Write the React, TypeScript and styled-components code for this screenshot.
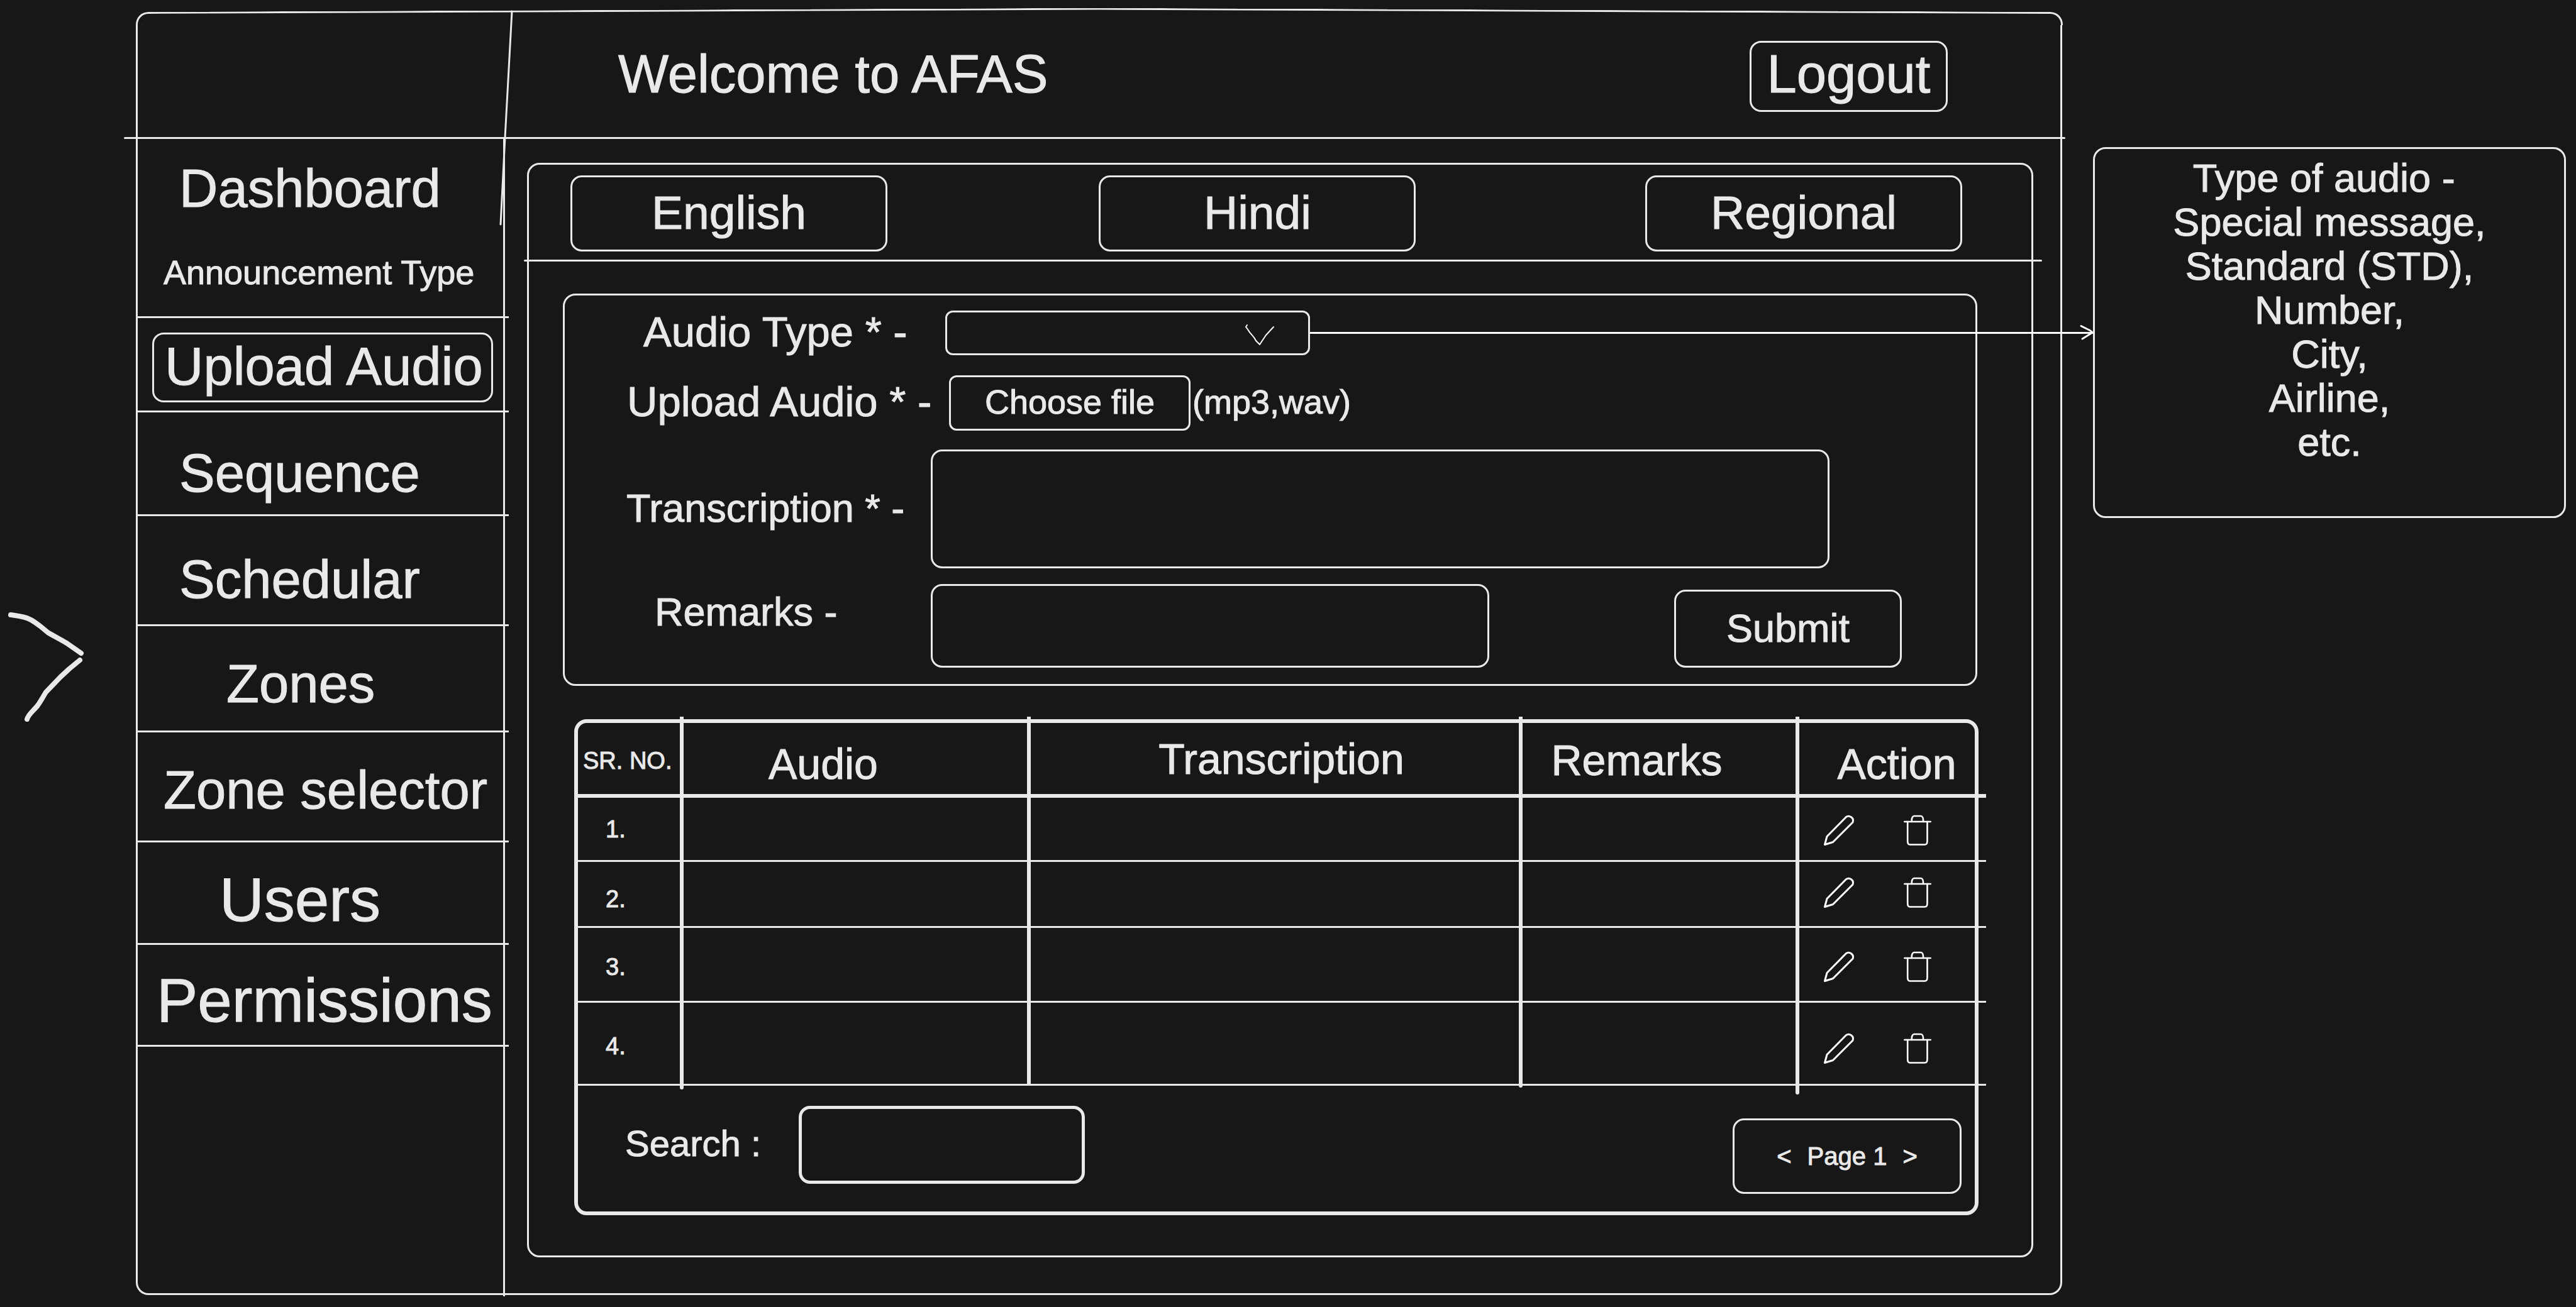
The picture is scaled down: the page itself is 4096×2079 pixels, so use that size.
import React from "react";
import styled, { createGlobalStyle, css } from "styled-components";

const ink = "#e9e9e9";
const paper = "#171717";
const bright = "#ffffff";

const GlobalStyle = createGlobalStyle`
  *, *::before, *::after { box-sizing: border-box; }
  body {
    margin: 0;
    background: ${paper};
    color: ${ink};
    font-family: "Liberation Sans", Arial, sans-serif;
    -webkit-text-stroke: 1px ${ink};
    overflow-x: hidden;
  }
  button, input, select, textarea { font-family: inherit; color: inherit; }
`;

const outlined = css`
  border: 3px solid ${ink};
  border-radius: 18px;
  background: transparent;
`;

const Page = styled.div`
  position: relative;
  display: flex;
  align-items: flex-start;
  min-height: 100vh;
  padding: 19px 16px 19px 0;
`;

const Gutter = styled.aside`
  flex: 0 0 216px;
  padding: 951px 0 0 10px;
`;

const Frame = styled.main`
  flex: 1;
  min-width: 0;
`;

/* The top edge rises slightly towards its middle. */
const FrameTop = styled.div`
  display: flex;
  height: 21px;
`;

const TopEdge = styled.div<{ $side: "left" | "right" }>`
  flex: 1;
  border-top: 3px solid ${ink};
  ${({ $side }) => css`
    border-${$side}: 3px solid ${ink};
    border-top-${$side}-radius: 20px;
    transform: skewY(${$side === "left" ? "-0.24deg" : "0.24deg"});
    transform-origin: ${$side} top;
  `}
`;

const FrameBody = styled.div`
  position: relative;
  border: 3px solid ${ink};
  border-top: 0;
  border-radius: 0 0 20px 20px;
`;

const SlantedStroke = styled.svg`
  position: absolute;
  top: -24px;
  left: 575px;
`;

const Header = styled.header`
  display: flex;
  justify-content: space-between;
  align-items: flex-start;
  height: 178px;
  padding: 25px 179px 0 764px;
`;

const Title = styled.h1`
  margin: 0;
  font-size: 85px;
  line-height: 105px;
  font-weight: 400;
`;

const LogoutButton = styled.button`
  ${outlined}
  width: 315px;
  height: 113px;
  padding: 0 0 7px;
  font-size: 85px;
  line-height: 96px;
`;

const Rule = styled.div<{ $left: number; $right: number }>`
  height: 3px;
  margin: 0 -${(p) => p.$right}px 0 -${(p) => p.$left}px;
  border-radius: 2px;
  background: ${ink};
`;

const Columns = styled.div`
  display: flex;
  align-items: stretch;
`;

const Sidebar = styled.nav`
  flex: 0 0 584px;
  margin-bottom: -5px;
  border-right: 3px solid ${ink};
`;

const NavList = styled.ul`
  margin: 0 -9px 0 0;
  padding: 0;
  list-style: none;
`;

const NavItem = styled.li<{ $height: number; $top: number; $indent: number; $open?: boolean }>`
  height: ${(p) => p.$height}px;
  padding: ${(p) => p.$top}px 0 0 ${(p) => p.$indent}px;
  border-bottom: ${(p) => (p.$open ? "0" : `3px solid ${ink}`)};
`;

const NavLink = styled.a<{ $size: number; $active?: boolean }>`
  display: block;
  color: inherit;
  text-decoration: none;
  white-space: nowrap;
  font-size: ${(p) => p.$size}px;
  line-height: ${(p) => (p.$size < 60 ? 60 : 96)}px;
  ${(p) =>
    p.$active &&
    css`
      ${outlined}
      width: 542px;
      height: 111px;
      padding: 3px 0 0 17px;
    `}
`;

const Panel = styled.section`
  flex: 1;
  min-width: 0;
  margin: 38px 43px 57px 35px;
  padding-bottom: 64px;
  border: 3px solid ${ink};
  border-radius: 20px;
`;

const Tabs = styled.div`
  display: grid;
  grid-template-columns: 504px 12fr 504px 13fr 504px;
  padding: 17px 110px 13px 66px;
`;

const Tab = styled.button`
  ${outlined}
  height: 121px;
  padding: 0 0 4px;
  font-size: 75px;
  line-height: 96px;
  &:nth-child(2) { grid-column: 3; }
  &:nth-child(3) { grid-column: 5; }
`;

const UploadForm = styled.form`
  margin: 51px 86px 0 54px;
  padding: 24px 0 26px;
  border: 3px solid ${ink};
  border-radius: 20px;
`;

const FieldRow = styled.div<{ $gap?: number }>`
  display: flex;
  align-items: center;
  margin-top: ${(p) => p.$gap ?? 0}px;
`;

const FieldLabel = styled.label<{ $indent: number; $width: number; $size: number; $raise?: number }>`
  flex: 0 0 ${(p) => p.$width}px;
  padding: 0 0 ${(p) => p.$raise ?? 4}px ${(p) => p.$indent}px;
  font-size: ${(p) => p.$size}px;
  line-height: 66px;
  white-space: nowrap;
`;

const SelectBox = styled.div`
  position: relative;
  width: 580px;
  height: 71px;
`;

const Select = styled.select`
  ${outlined}
  border-radius: 12px;
  appearance: none;
  width: 100%;
  height: 100%;
  padding: 0 110px 0 20px;
  font-size: 54px;
`;

const SelectMark = styled.svg`
  position: absolute;
  top: 21px;
  right: 56px;
  pointer-events: none;
`;

const FileButton = styled.button`
  ${outlined}
  border-radius: 12px;
  width: 384px;
  height: 88px;
  padding: 0 0 4px;
  font-size: 54px;
  line-height: 60px;
`;

const Hint = styled.span`
  padding: 0 0 4px 3px;
  font-size: 54px;
  line-height: 60px;
`;

const TextArea = styled.textarea`
  ${outlined}
  flex: 1;
  height: 189px;
  margin-right: 232px;
  padding: 20px;
  font-size: 54px;
  resize: none;
`;

const RemarksInput = styled.input`
  ${outlined}
  width: 888px;
  height: 133px;
  padding: 0 20px;
  font-size: 54px;
`;

const SubmitButton = styled.button`
  ${outlined}
  align-self: flex-end;
  width: 362px;
  height: 124px;
  margin: 0 117px 0 auto;
  padding: 0 0 2px;
  font-size: 63px;
  line-height: 70px;
`;

const TableFrame = styled.section`
  margin: 53px 84px 0 72px;
  border: 6px solid ${ink};
  border-radius: 20px;
`;

const Table = styled.table`
  table-layout: fixed;
  width: calc(100% + 24px);
  margin: -10px 0 0 -6px;
  border-collapse: separate;
  border-spacing: 0;
`;

const Column = styled.col<{ $share: number }>`
  width: ${(p) => p.$share}%;
`;

const HeadCell = styled.th<{ $indent: number; $drop: number; $small?: boolean }>`
  height: 129px;
  padding: ${(p) => p.$drop}px 0 0 ${(p) => p.$indent}px;
  border-right: 6px solid ${ink};
  border-bottom: 6px solid ${ink};
  font-size: ${(p) => (p.$small ? 38 : 68)}px;
  line-height: 76px;
  font-weight: 400;
  text-align: left;
  white-space: nowrap;
  &:last-child { border-right: 0; }
`;

const Row = styled.tr<{ $height: number }>`
  height: ${(p) => p.$height}px;
`;

const Cell = styled.td<{ $tail?: number }>`
  position: relative;
  padding: 0;
  border-right: 6px solid ${ink};
  border-bottom: 3px solid ${ink};
  &:last-child { border-right: 0; }
  ${(p) =>
    p.$tail &&
    css`
      &::after {
        content: "";
        position: absolute;
        right: -6px;
        bottom: -${p.$tail + 3}px;
        width: 6px;
        height: ${p.$tail + 3}px;
        border-radius: 0 0 3px 3px;
        background: ${ink};
      }
    `}
`;

const NumberCell = styled(Cell)<{ $drop: number }>`
  padding: ${(p) => p.$drop}px 0 0 50px;
  font-size: 38px;
  line-height: 44px;
`;

const Actions = styled.div<{ $drop: number }>`
  display: flex;
  gap: 79px;
  padding: ${(p) => Math.max(p.$drop, 0)}px 0 ${(p) => Math.max(-p.$drop, 0)}px 39px;
`;

const IconButton = styled.button`
  display: block;
  padding: 0;
  border: 0;
  background: transparent;
  svg { display: block; overflow: visible; }
`;

const TableFooter = styled.div`
  display: flex;
  align-items: flex-start;
  padding: 32px 21px 28px 0;
`;

const SearchLabel = styled.label`
  flex: 0 0 351px;
  padding-left: 75px;
  font-size: 58px;
  line-height: 120px;
  white-space: pre;
`;

const SearchInput = styled.input`
  ${outlined}
  border-width: 5px;
  width: 455px;
  height: 124px;
  padding: 0 20px;
  font-size: 54px;
`;

const Pager = styled.div`
  ${outlined}
  display: flex;
  justify-content: center;
  align-items: center;
  gap: 25px;
  width: 364px;
  height: 120px;
  margin: 20px 0 0 auto;
  font-size: 40px;
  line-height: 44px;
`;

const PagerButton = styled.button`
  padding: 0;
  border: 0;
  background: transparent;
  font-size: 40px;
  line-height: 44px;
`;

const Note = styled.aside`
  flex: 0 0 752px;
  height: 590px;
  margin: 215px 0 0 49px;
  padding-top: 11px;
  border: 3px solid ${ink};
  border-radius: 20px;
  font-size: 63px;
  line-height: 70px;
  text-align: center;
  white-space: pre-line;
`;

const Connector = styled.div`
  position: absolute;
  top: 516px;
  left: 2083px;
  right: 767px;
  display: flex;
  align-items: center;
  height: 26px;
`;

const ConnectorLine = styled.div`
  flex: 1;
  height: 3px;
  margin-right: -22px;
  background: ${bright};
`;

const Pencil = () => (
  <svg width="48" height="49" viewBox="0 0 48 49" fill="none" stroke={bright} strokeWidth="3" strokeLinejoin="round" aria-hidden="true">
    <path d="M1.5 47.5 L5 34.5 L35.5 3.5 C40.5 0 48.5 5 46 12 L14.5 43.5 Z" />
  </svg>
);

const Trash = () => (
  <svg width="44" height="49" viewBox="0 0 44 49" fill="none" stroke={bright} strokeWidth="2.6" strokeLinecap="round" strokeLinejoin="round" aria-hidden="true">
    <path d="M1.3 11 H42.7" />
    <path d="M12.8 11 V8 C12.8 5 14.5 2 16.5 2 H27 C29.5 2 31 5 31 8 V11" />
    <path d="M6.2 11 V42 C6.2 45.5 7.5 47.5 10 47.5 H33.5 C36.5 47.5 37.5 45.5 37.5 42 V11" />
  </svg>
);

const navItems = [
  { label: "Dashboard", height: 127, top: 31, indent: 66, size: 85, open: true },
  { label: "Announcement Type", height: 158, top: 55, indent: 41, size: 54 },
  { label: "Upload Audio", height: 150, top: 23, indent: 23, size: 85, active: true },
  { label: "Sequence", height: 165, top: 49, indent: 66, size: 85 },
  { label: "Schedular", height: 175, top: 53, indent: 66, size: 85 },
  { label: "Zones", height: 169, top: 44, indent: 141, size: 85 },
  { label: "Zone selector", height: 175, top: 44, indent: 41, size: 85 },
  { label: "Users", height: 163, top: 43, indent: 130, size: 98 },
  { label: "Permissions", height: 162, top: 40, indent: 30, size: 98 },
];

const rows = [
  { id: 1, height: 102, numberDrop: 0, iconDrop: 4 },
  { id: 2, height: 105, numberDrop: 16, iconDrop: -6 },
  { id: 3, height: 119, numberDrop: 8, iconDrop: 6 },
  { id: 4, height: 132, numberDrop: 8, iconDrop: 16 },
];

const noteText = "Type of audio -\u00a0\nSpecial message,\nStandard (STD),\nNumber,\nCity,\nAirline,\netc.";

export default function App() {
  return (
    <>
      <GlobalStyle />
      <Page>
        <Gutter>
          <svg width="130" height="184" viewBox="0 0 130 184" fill="none" stroke={ink} strokeWidth="8" strokeLinecap="round" strokeLinejoin="round" aria-hidden="true">
            <path d="M7 8 C20 10 30 11 37 15 C44 18 48 22 54 26 L66 36 C76 42 86 47 96 53 L119 69" />
            <path d="M117 80 L100 94 L86 107 L63 131 C58 139 55 145 50 152 C44 160 35 166 33 174" />
          </svg>
        </Gutter>

        <Frame>
          <FrameTop>
            <TopEdge $side="left" />
            <TopEdge $side="right" />
          </FrameTop>
          <FrameBody>
            <SlantedStroke width="24" height="344" viewBox="0 0 24 344" aria-hidden="true">
              <path d="M20 2 L9 203 L2 341" fill="none" stroke={ink} strokeWidth="3" strokeLinecap="round" />
            </SlantedStroke>
            <Header>
              <Title>Welcome to AFAS</Title>
              <LogoutButton type="button">Logout</LogoutButton>
            </Header>
            <Rule $left={22} $right={8} />

            <Columns>
              <Sidebar>
                <NavList>
                  {navItems.map((item) => (
                    <NavItem key={item.label} $height={item.height} $top={item.top} $indent={item.indent} $open={item.open}>
                      <NavLink href="#" $size={item.size} $active={item.active}>
                        {item.label}
                      </NavLink>
                    </NavItem>
                  ))}
                </NavList>
              </Sidebar>

              <Panel>
                <Tabs>
                  <Tab type="button">English</Tab>
                  <Tab type="button">Hindi</Tab>
                  <Tab type="button">Regional</Tab>
                </Tabs>
                <Rule $left={8} $right={17} />

                <UploadForm onSubmit={(event) => event.preventDefault()}>
                  <FieldRow>
                    <FieldLabel htmlFor="audio-type" $indent={125} $width={605} $size={67}>
                      Audio Type * -
                    </FieldLabel>
                    <SelectBox>
                      <Select id="audio-type" defaultValue="">
                        <option value=""></option>
                      </Select>
                      <SelectMark width="48" height="36" viewBox="0 0 48 36" aria-hidden="true">
                        <path d="M4 2 L2 5 L5 9 C10 18 14 18 18 27 L24 33 L34 18 L46 5" fill="none" stroke={bright} strokeWidth="2" strokeLinecap="round" strokeLinejoin="round" />
                      </SelectMark>
                    </SelectBox>
                  </FieldRow>

                  <FieldRow $gap={32}>
                    <FieldLabel htmlFor="audio-file" $indent={99} $width={611} $size={67}>
                      Upload Audio * -
                    </FieldLabel>
                    <FileButton id="audio-file" type="button">Choose file</FileButton>
                    <Hint>(mp3,wav)</Hint>
                  </FieldRow>

                  <FieldRow $gap={30}>
                    <FieldLabel htmlFor="transcription" $indent={98} $width={582} $size={63}>
                      Transcription * -
                    </FieldLabel>
                    <TextArea id="transcription" />
                  </FieldRow>

                  <FieldRow $gap={25}>
                    <FieldLabel htmlFor="remarks" $indent={143} $width={582} $size={63} $raise={46}>
                      Remarks -
                    </FieldLabel>
                    <RemarksInput id="remarks" type="text" />
                    <SubmitButton type="submit">Submit</SubmitButton>
                  </FieldRow>
                </UploadForm>

                <TableFrame>
                  <Table>
                    <colgroup>
                      <Column $share={7.75} />
                      <Column $share={24.6} />
                      <Column $share={34.8} />
                      <Column $share={19.6} />
                      <Column $share={13.25} />
                    </colgroup>
                    <thead>
                      <tr>
                        <HeadCell $indent={14} $drop={17} $small>SR. NO.</HeadCell>
                        <HeadCell $indent={135} $drop={26}>Audio</HeadCell>
                        <HeadCell $indent={203} $drop={10}>Transcription</HeadCell>
                        <HeadCell $indent={46} $drop={14}>Remarks</HeadCell>
                        <HeadCell $indent={61} $drop={26}>Action</HeadCell>
                      </tr>
                    </thead>
                    <tbody>
                      {rows.map((row) => {
                        const last = row.id === rows.length;
                        return (
                          <Row key={row.id} $height={row.height}>
                            <NumberCell $drop={row.numberDrop} $tail={last ? 6 : 0}>{row.id}.</NumberCell>
                            <Cell />
                            <Cell $tail={last ? 3 : 0} />
                            <Cell $tail={last ? 14 : 0} />
                            <Cell>
                              <Actions $drop={row.iconDrop}>
                                <IconButton type="button" aria-label="Edit"><Pencil /></IconButton>
                                <IconButton type="button" aria-label="Delete"><Trash /></IconButton>
                              </Actions>
                            </Cell>
                          </Row>
                        );
                      })}
                    </tbody>
                  </Table>
                  <TableFooter>
                    <SearchLabel htmlFor="search">Search :</SearchLabel>
                    <SearchInput id="search" type="text" />
                    <Pager>
                      <PagerButton type="button">&lt;</PagerButton>
                      <span>Page 1</span>
                      <PagerButton type="button">&gt;</PagerButton>
                    </Pager>
                  </TableFooter>
                </TableFrame>
              </Panel>
            </Columns>
          </FrameBody>
        </Frame>

        <Note>{noteText}</Note>
        <Connector>
          <ConnectorLine />
          <svg width="23" height="26" viewBox="0 0 23 26" fill="none" stroke={bright} strokeWidth="3" strokeLinecap="round" aria-hidden="true">
            <path d="M3 2.5 L15 8.5 Q20 11 21 13 L5 23" />
          </svg>
        </Connector>
      </Page>
    </>
  );
}
